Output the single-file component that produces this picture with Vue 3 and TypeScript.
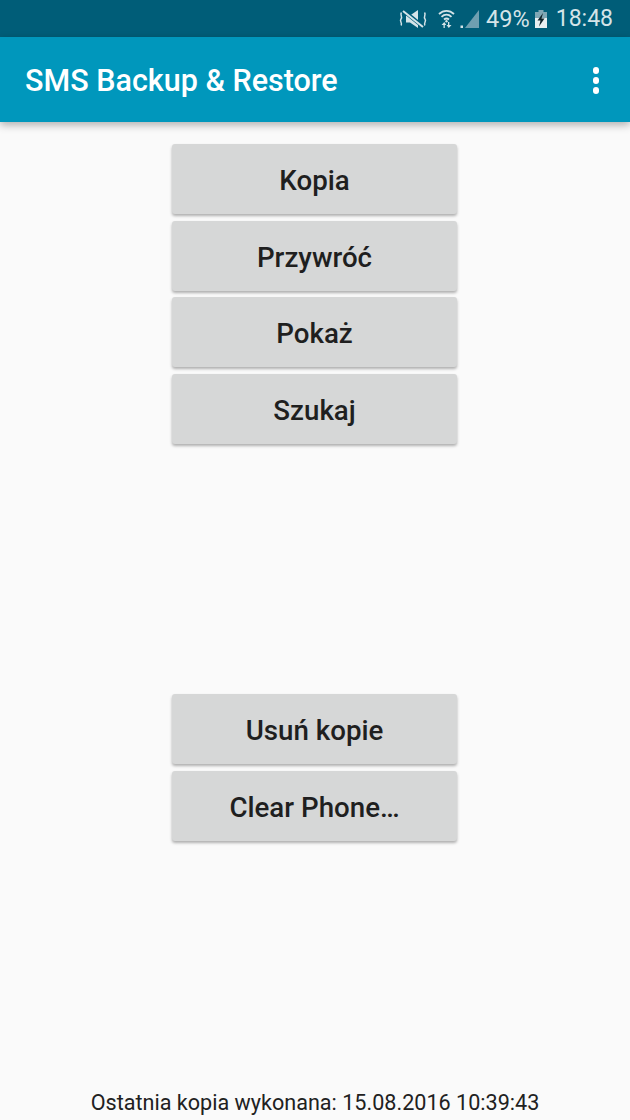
<script setup lang="ts">
const topButtons: string[] = ['Kopia', 'Przywróć', 'Pokaż', 'Szukaj']
const bottomButtons: string[] = ['Usuń kopie', 'Clear Phone…']
</script>

<template>
  <div class="screen">
    <div class="status">
      <svg class="ic-mute" viewBox="0 0 28 18" width="28" height="18">
        <path d="M7 5.500h4L19 0v18l-8-5.500H7z" fill="#d5e4e8" />
        <path d="M4 0.500l20 16" stroke="#005d78" stroke-width="4" />
        <path d="M4 1l20 16" stroke="#d5e4e8" stroke-width="2" />
        <path d="M2.500 2.500C0.500 5 4 6.500 2 9s2 4 0 6.500M25.500 2.500c2 2.500-1.500 4 0.500 6.500s-2 4 0 6.500" stroke="#d5e4e8" stroke-width="1.500" fill="none" />
      </svg>
      <svg class="ic-wifi" viewBox="0 0 17 19" width="17" height="19">
        <path d="M1 5C5.500 0.800 11.500 0.800 16 5M3.500 7.800C6.500 5 10.500 5 13.500 7.800M6 10.500c1.600-1.300 3.400-1.300 5 0" stroke="#d5e4e8" stroke-width="1.800" fill="none" />
        <circle cx="8.500" cy="12.300" r="1.200" fill="#d5e4e8" />
        <path d="M5.500 19v-3H3.500l2.800-3 2 3H6.800v3zM10 13v3H8.500l2.300 3 2.700-3h-2.200v-3z" fill="#d5e4e8" />
      </svg>
      <svg class="ic-signal" viewBox="0 0 20 18" width="20" height="18">
        <path d="M5 18L19 0v18z" fill="#6f9fb0" />
        <rect x="0.500" y="15.500" width="2.500" height="2.500" fill="#d5e4e8" />
      </svg>
      <span class="pct">49%</span>
      <svg class="ic-batt" viewBox="0 0 12 18" width="12" height="18">
        <rect x="3.500" y="0" width="5" height="2" fill="#7fa6b4" />
        <rect x="0" y="2" width="12" height="16" fill="#e8eff1" />
        <rect x="0" y="2" width="12" height="6" fill="#7fa6b4" />
        <path d="M8 3L2.500 10.500h3L4 16.500l5.500-8h-3z" fill="#10242b" />
      </svg>
      <span class="time">18:48</span>
    </div>

    <header class="appbar">
      <h1 class="title">SMS Backup &amp; Restore</h1>
      <div class="menu"><i></i><i></i><i></i></div>
    </header>

    <main class="content">
      <div class="group">
        <button v-for="b in topButtons" :key="b" class="btn" type="button">{{ b }}</button>
      </div>
      <div class="group lower">
        <button v-for="b in bottomButtons" :key="b" class="btn" type="button">{{ b }}</button>
      </div>
      <p class="last">Ostatnia kopia wykonana: 15.08.2016 10:39:43</p>
    </main>
  </div>
</template>

<style scoped>
.screen {
  width: 630px;
  height: 1120px;
  display: flex;
  flex-direction: column;
  background: #fafafa;
  overflow: hidden;
  font-family: Roboto, "Liberation Sans", sans-serif;
}
.status {
  height: 37px;
  flex: none;
  background: #005d78;
  display: flex;
  align-items: center;
  justify-content: flex-end;
  padding-right: 17px;
  color: #d5e4e8;
}
.ic-mute { margin-right: 11px; }
.ic-wifi { margin-right: 5px; }
.ic-signal { margin-right: 6px; margin-top: 1px; }
.pct { font-size: 23.500px; margin-right: 5px; }
.ic-batt { margin-right: 9px; }
.time { font-size: 23px; }
.appbar {
  height: 85px;
  flex: none;
  box-sizing: border-box;
  background: #0097bc;
  display: flex;
  align-items: center;
  justify-content: space-between;
  padding: 2px 31px 0 25px;
  box-shadow: 0 3px 8px rgba(0, 0, 0, 0.3);
  position: relative;
  z-index: 1;
}
.title {
  margin: 0;
  color: #fff;
  font-size: 30.500px;
  font-weight: 500;
}
.menu {
  display: flex;
  flex-direction: column;
  gap: 3.500px;
}
.menu i {
  width: 6.500px;
  height: 6.500px;
  border-radius: 50%;
  background: #fff;
}
.content {
  flex: 1;
  display: flex;
  flex-direction: column;
  align-items: center;
  padding: 22px 1px 0 0;
}
.group {
  display: flex;
  flex-direction: column;
  gap: 6.700px;
}
.lower { margin-top: 250px; }
.btn {
  width: 285px;
  height: 70px;
  border: 0;
  border-radius: 3px;
  background: #d6d7d7;
  color: #1f1f1f;
  font-family: inherit;
  font-size: 27.700px;
  font-weight: 500;
  padding: 3px 0 0;
  box-shadow: 0 2px 3px rgba(0, 0, 0, 0.3);
}
.last {
  margin: auto 0 0;
  padding: 0 0 4px 1px;
  color: #212121;
  font-size: 21.600px;
  line-height: 26px;
}
</style>
